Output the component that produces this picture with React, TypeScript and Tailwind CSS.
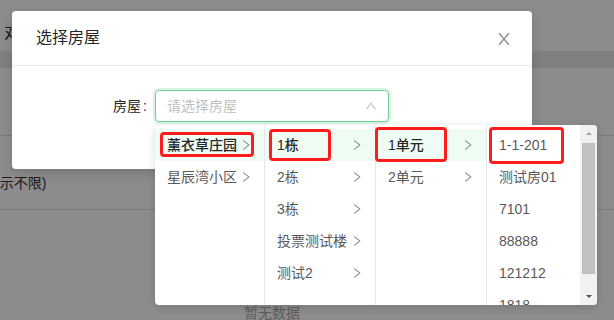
import React from "react";

const RIGHT_PATH =
  "M765.7 486.8L314.9 134.7A7.97 7.97 0 0 0 302 141v77.3c0 4.9 2.3 9.6 6.1 12.6l360 281.1-360 281.1c-3.9 3-6.1 7.7-6.1 12.6V883c0 6.7 7.7 10.4 12.9 6.3l450.8-352.1a31.96 31.96 0 0 0 0-50.4z";
const DOWN_PATH =
  "M884 256h-75c-5.1 0-9.9 2.5-12.9 6.6L512 654.2 227.9 262.6c-3-4.1-7.8-6.6-12.9-6.6h-75c-6.5 0-10.3 7.4-6.5 12.7l352.6 486.1c12.8 17.6 39 17.6 51.7 0l352.6-486.1c3.9-5.3.1-12.7-6.4-12.7z";
const CLOSE_PATH =
  "M563.8 512l262.5-312.9c4.4-5.2.7-13.1-6.1-13.1h-79.8c-4.7 0-9.2 2.1-12.3 5.7L511.6 449.8 295.1 191.7c-3-3.6-7.5-5.7-12.3-5.7H203c-6.8 0-10.5 7.9-6.1 13.1L459.4 512 196.9 824.9A7.95 7.95 0 0 0 203 838h79.8c4.7 0 9.2-2.1 12.3-5.7l216.5-258.1 216.5 258.1c3 3.6 7.5 5.7 12.3 5.7h79.8c6.8 0 10.5-7.9 6.1-13.1L563.8 512z";

const Icon = ({ d, className }: { d: string; className?: string }) => (
  <svg viewBox="64 64 896 896" className={className} fill="currentColor">
    <path d={d} />
  </svg>
);

type Item = { label: string; active?: boolean; expand?: boolean };

const MenuColumn = ({ items, width }: { items: Item[]; width: string }) => (
  <ul className={`${width} h-full border-r border-[#e8e8e8] py-1 shrink-0`}>
    {items.map((it) => (
      <li
        key={it.label}
        className={`flex items-center justify-between h-8 px-3 text-sm leading-[22px] whitespace-nowrap ${
          it.active ? "bg-[#effcf3] font-medium text-[#262626]" : "text-[#595959]"
        }`}
      >
        <span>{it.label}</span>
        {it.expand && <Icon d={RIGHT_PATH} className="w-3 h-3 text-[#8c8c8c] shrink-0" />}
      </li>
    ))}
  </ul>
);

const App = () => {
  const col1: Item[] = [
    { label: "薰衣草庄园", active: true, expand: true },
    { label: "星辰湾小区", expand: true },
  ];
  const col2: Item[] = [
    { label: "1栋", active: true, expand: true },
    { label: "2栋", expand: true },
    { label: "3栋", expand: true },
    { label: "投票测试楼", expand: true },
    { label: "测试2", expand: true },
  ];
  const col3: Item[] = [
    { label: "1单元", active: true, expand: true },
    { label: "2单元", expand: true },
  ];
  const rooms = ["1-1-201", "测试房01", "7101", "88888", "121212", "1818"];

  return (
    <div className="relative w-[614px] h-[320px] overflow-hidden bg-white font-['Liberation_Sans','Noto_Sans_CJK_SC',sans-serif]">
      {/* page behind the mask */}
      <div className="h-[51px] pt-[22px] pl-[4px] text-base leading-[22px] text-[#333]">对话</div>
      <div className="h-[17px] bg-[#eaeaea]" />
      <div className="h-[68px] border-b border-[#e0e0e0]" />
      <div className="h-[74px] border-b border-[#e0e0e0] pt-[36px] ml-[-19px] text-sm leading-[22px] text-[#333]">
        (显示不限)
      </div>
      <div className="pt-[92px] pl-[244px] text-sm leading-[22px] text-[#aaa]">暂无数据</div>

      {/* mask */}
      <div className="absolute inset-0 bg-black/45" />

      {/* modal */}
      <div className="absolute left-[12px] top-[11px] w-[520px] h-[158px] bg-white rounded-sm shadow-[0_4px_12px_rgba(0,0,0,0.15)]">
        <div className="px-6 py-4 border-b border-[#e8e8e8] text-base leading-[22px] text-[#262626]">选择房屋</div>
        <button className="absolute right-0 top-0 w-14 h-14 flex items-center justify-center text-[#8c8c8c]">
          <Icon d={CLOSE_PATH} className="w-4 h-4" />
        </button>
        <div className="p-6 flex items-center">
          <div className="w-[119px] text-right text-sm leading-[22px] text-[#262626] pr-2">
            房屋<span className="ml-[2px]">:</span>
          </div>
          <div className="w-[234px] h-8 border border-[#6fd09a] rounded shadow-[0_0_0_2px_rgba(82,196,120,0.2)] flex items-center justify-between px-[11px]">
            <span className="text-sm text-[#bfbfbf]">请选择房屋</span>
            <Icon d={DOWN_PATH} className="w-3 h-3 rotate-180 text-[#bfbfbf]" />
          </div>
        </div>
      </div>

      {/* cascader dropdown */}
      <div className="absolute left-[155px] top-[125px] h-[180px] flex bg-white rounded shadow-[0_2px_8px_rgba(0,0,0,0.15)]">
        <MenuColumn items={col1} width="w-[110px]" />
        <MenuColumn items={col2} width="w-[111px]" />
        <MenuColumn items={col3} width="w-[111px]" />
        <div className="w-[110px] h-full flex overflow-hidden rounded-r">
          <ul className="flex-1 py-1 overflow-hidden">
            {rooms.map((r) => (
              <li key={r} className="h-8 px-3 flex items-center text-sm leading-[22px] text-[#595959] whitespace-nowrap">
                {r}
              </li>
            ))}
          </ul>
          <div className="w-[17px] h-full bg-[#f1f1f1] flex flex-col">
            <div className="h-[17px] flex items-center justify-center">
              <div className="w-0 h-0 border-x-[3px] border-x-transparent border-b-[3px] border-b-[#a3a3a3]" />
            </div>
            <div className="mt-[1px] mx-[2px] h-[131px] bg-[#c1c1c1]" />
            <div className="flex-1" />
            <div className="h-[17px] flex items-center justify-center">
              <div className="w-0 h-0 border-x-[3px] border-x-transparent border-t-[3px] border-t-[#505050]" />
            </div>
          </div>
        </div>

        {/* red annotation boxes */}
        <div className="absolute left-[5px] top-[7px] w-[94px] h-[25px] border-[3px] border-[#fe1c1c] rounded-[4px]" />
        <div className="absolute left-[114px] top-[4px] w-[62px] h-[32px] border-[3px] border-[#fe1c1c] rounded-[4px]" />
        <div className="absolute left-[220px] top-[2px] w-[72px] h-[35px] border-[3px] border-[#fe1c1c] rounded-[4px]" />
        <div className="absolute left-[334px] top-[2px] w-[75px] h-[37px] border-[3px] border-[#fe1c1c] rounded-[4px]" />
      </div>
    </div>
  );
};

export default App;
